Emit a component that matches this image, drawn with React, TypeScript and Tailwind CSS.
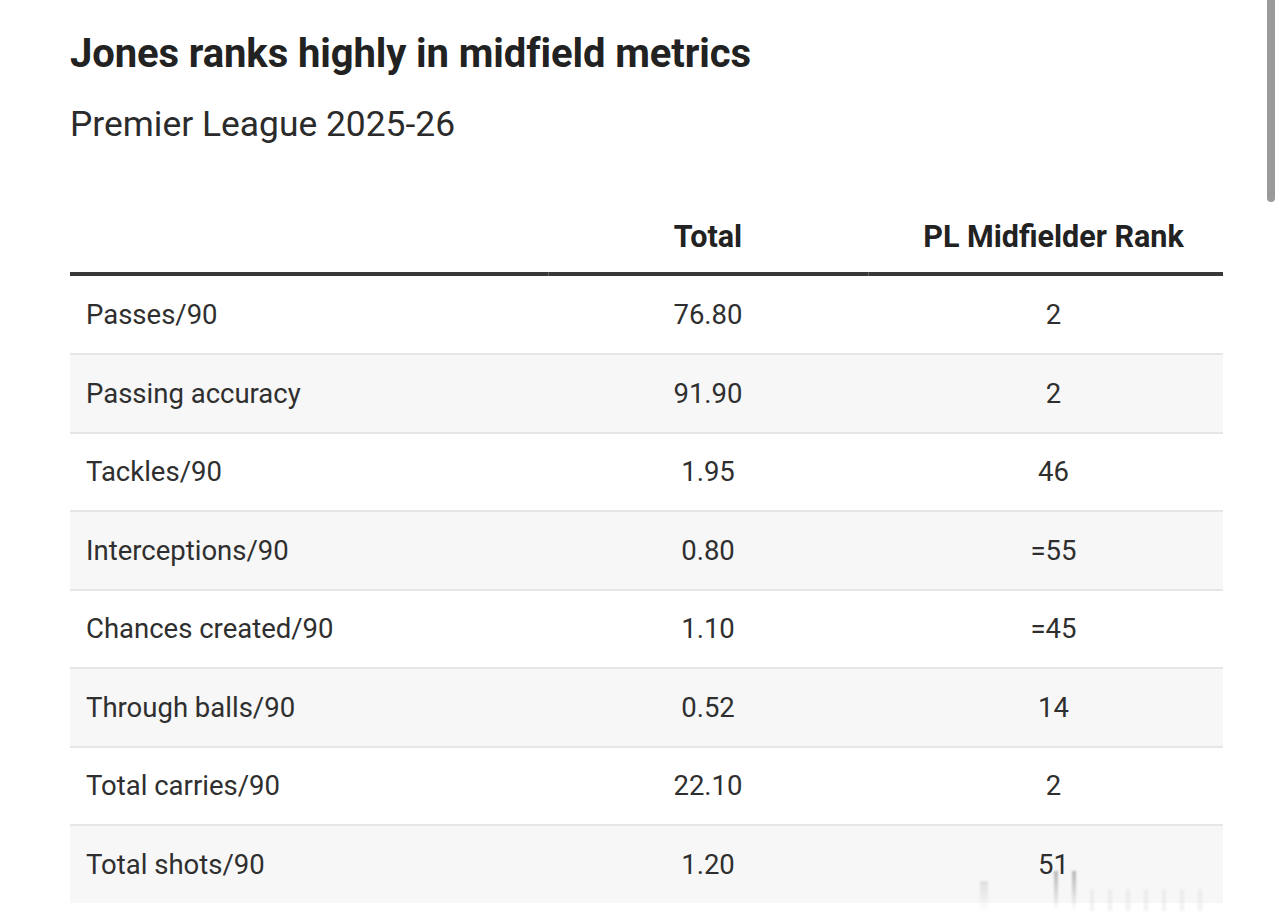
import React from "react";

const rows: [string, string, string][] = [
  ["Passes/90", "76.80", "2"],
  ["Passing accuracy", "91.90", "2"],
  ["Tackles/90", "1.95", "46"],
  ["Interceptions/90", "0.80", "=55"],
  ["Chances created/90", "1.10", "=45"],
  ["Through balls/90", "0.52", "14"],
  ["Total carries/90", "22.10", "2"],
  ["Total shots/90", "1.20", "51"],
];

export default function App() {
  return (
    <div className="relative w-[1284px] h-[923px] overflow-hidden bg-white font-['Roboto',sans-serif] text-[#2b2b2b]">
      <div className="pl-[70px] pr-[61px] pt-[30px]">
        <h1 className="text-[40px] leading-[48px] font-bold tracking-[-0.1px] text-[#222]">
          Jones ranks highly in midfield metrics
        </h1>
        <div className="mt-[25px] text-[35.4px] leading-[42px] text-[#2b2b2b]">Premier League 2025-26</div>
        <div className="mt-[57px]">
          <div className="flex h-[70px] items-center text-[30.5px] font-bold text-[#222]">
            <div className="w-[478px]" />
            <div className="w-[320px] text-center">Total</div>
            <div className="flex-1 pl-[16px] text-center">PL Midfielder Rank</div>
          </div>
          <div className="flex h-[4px]">
            <div className="w-[478px] bg-[#383838]" />
            <div className="w-[320px] border-l border-[#666] bg-[#383838]" />
            <div className="flex-1 border-l border-[#666] bg-[#383838]" />
          </div>
          {rows.map((r, i) => (
            <div
              key={i}
              className={`flex items-center text-[27.5px] text-[#2f2f2f] ${i > 0 ? "h-[78.5px] border-t-2 border-[#e6e6e6]" : "h-[77px]"} ${i % 2 === 1 ? "bg-[#f7f7f7]" : "bg-white"}`}
            >
              <div className="w-[478px] pl-[16px]">{r[0]}</div>
              <div className="w-[320px] text-center">{r[1]}</div>
              <div className="flex-1 pl-[16px] text-center">{r[2]}</div>
            </div>
          ))}
        </div>
      </div>
      <div className="absolute right-[9px] top-0 h-[202px] w-[8px] rounded-b-full bg-[#9a9a9a]" />
      <div className="absolute bottom-[12px] left-[980px] flex h-[40px] w-[290px] items-end gap-[14px] opacity-40">
        <div className="h-[30px] w-[8px] bg-gradient-to-b from-[#bbb] to-white blur-[1px]" />
        <div className="ml-[52px] h-[40px] w-[4px] bg-gradient-to-b from-[#555] to-white blur-[1px]" />
        <div className="h-[40px] w-[4px] bg-gradient-to-b from-[#555] to-white blur-[1px]" />
        <div className="h-[22px] w-[4px] bg-[#ddd] blur-[1px]" />
        <div className="h-[22px] w-[4px] bg-[#ddd] blur-[1px]" />
        <div className="h-[22px] w-[4px] bg-[#ddd] blur-[1px]" />
        <div className="h-[22px] w-[4px] bg-[#ddd] blur-[1px]" />
        <div className="h-[22px] w-[4px] bg-[#ddd] blur-[1px]" />
        <div className="h-[22px] w-[4px] bg-[#ddd] blur-[1px]" />
        <div className="h-[22px] w-[4px] bg-[#ddd] blur-[1px]" />
      </div>
    </div>
  );
}
